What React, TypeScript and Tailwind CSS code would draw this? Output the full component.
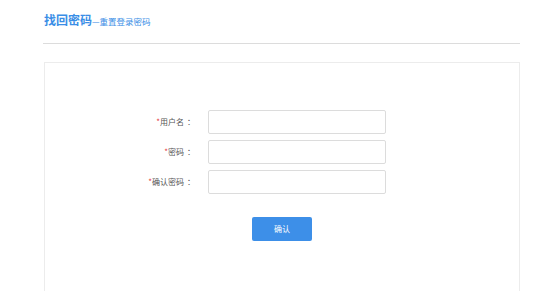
import React from "react";

const fields = [
  { label: "用户名", type: "text" },
  { label: "密码", type: "password" },
  { label: "确认密码", type: "password" },
];

export default function App() {
  return (
    <div className="h-screen bg-white font-['Noto_Sans_CJK_SC','Noto_Sans',sans-serif] overflow-hidden">
      <div className="ml-[43px] w-[477px] pt-[12px]">
        <div className="flex items-end border-b border-[#dcdcdc] pb-[15px] pl-[1px]">
          <h1 className="text-[12px] leading-[16px] font-bold text-[#3a8ee6]">找回密码</h1>
          <span className="text-[8.5px] leading-[12px] text-[#3a8ee6] mb-[1px]">—重置登录密码</span>
        </div>

        <div className="mt-[18px] ml-[1px] h-[240px] border border-[#ececec] pt-[47px]">
          <div className="flex flex-col gap-[6px]">
            {fields.map((f) => (
              <div key={f.label} className="flex items-center">
                <label className="w-[150px] text-right text-[8px] text-[#555] whitespace-nowrap">
                  <span className="text-[#e4393c]">*</span>
                  {f.label}
                  <span className="ml-[3px]">：</span>
                </label>
                <input
                  type={f.type}
                  className="ml-[13px] w-[178px] h-[24px] border border-[#dcdcdc] rounded-[2px] outline-none px-2 text-[9px]"
                />
              </div>
            ))}
          </div>

          <div className="flex justify-center mt-[23px]">
            <button className="w-[60px] h-[24px] bg-[#3d8fe8] text-white text-[8px] rounded-[2px]">确认</button>
          </div>
        </div>
      </div>
    </div>
  );
}
